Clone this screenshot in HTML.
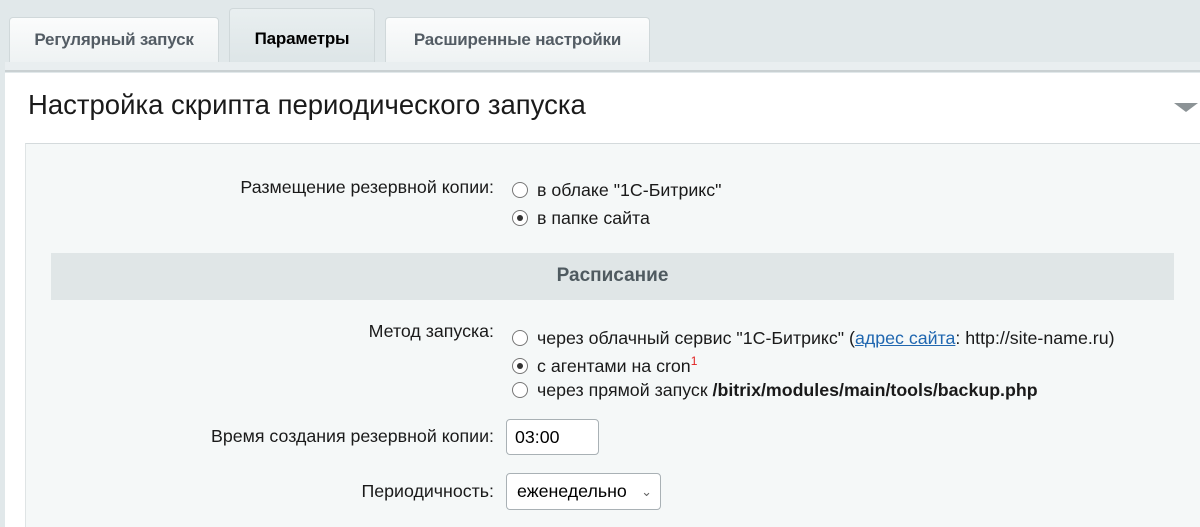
<!DOCTYPE html>
<html><head><meta charset="utf-8"><style>
*{margin:0;padding:0;box-sizing:border-box}
body{width:1200px;height:527px;overflow:hidden;background:#e1e8ea;font-family:"Liberation Sans",Arial,sans-serif;position:relative;color:#000}
.tab{position:absolute;top:17px;height:46px;background:linear-gradient(#fbfcfc,#eef2f3);border:1px solid #d0d8da;border-bottom:none;border-radius:4px 4px 0 0;font-size:17px;font-weight:bold;color:#535c64;text-align:center;line-height:44px;letter-spacing:-0.2px}
.tab.act{top:8px;height:55px;background:linear-gradient(#e9eff0,#dde5e7);color:#000;line-height:60px}
.bar{position:absolute;left:5px;right:0;top:62px;height:10px;background:#e9eef0;border-bottom:2px solid #c9d0d2}
.panel{position:absolute;left:5px;right:0;top:73px;bottom:0;background:#fff}
h1{position:absolute;left:28px;top:89px;font-size:27.5px;font-weight:normal;color:#1a1a1a}
.tri{position:absolute;right:2px;top:103px;width:0;height:0;border-left:12px solid transparent;border-right:12px solid transparent;border-top:9px solid #8c9396}
.content{position:absolute;left:25px;right:0;top:143px;bottom:0;background:#f5f8f8;border-top:1px solid #d4dadc;border-left:1px solid #dfe4e5}
.lbl{position:absolute;right:706px;font-size:17.8px;color:#1a1a1a;white-space:nowrap}
.opt{position:absolute;left:512px;font-size:17.8px;color:#1a1a1a;white-space:nowrap}
.r{display:inline-block;width:16px;height:16px;border:1px solid #777;border-radius:50%;background:#fff;vertical-align:-2px;margin-right:9px;position:relative}
.r.on::after{content:"";position:absolute;left:4px;top:4px;width:6px;height:6px;border-radius:50%;background:#333}
.sec{position:absolute;left:51px;width:1123px;top:253px;height:47px;background:#e0e6e7;font-size:19px;font-weight:bold;color:#4f5a60;text-align:center;line-height:46px}
a{color:#2067b0}
.inp{position:absolute;left:506px;width:93px;border:1px solid #a9b1b5;border-radius:4px;background:#fff;font-size:17.8px;padding-left:8px}
</style></head><body>
<div class="tab" style="left:9px;width:210px">Регулярный запуск</div>
<div class="tab act" style="left:229px;width:146px">Параметры</div>
<div class="tab" style="left:385px;width:265px">Расширенные настройки</div>
<div class="bar"></div>
<div class="panel"></div>
<h1>Настройка скрипта периодического запуска</h1>
<div class="tri"></div>
<div class="content"></div>
<div class="lbl" style="top:177px">Размещение резервной копии:</div>
<div class="opt" style="top:180px"><span class="r"></span>в облаке "1С-Битрикс"</div>
<div class="opt" style="top:208px"><span class="r on"></span>в папке сайта</div>
<div class="sec">Расписание</div>
<div class="lbl" style="top:321px">Метод запуска:</div>
<div class="opt" style="top:328px"><span class="r"></span>через облачный сервис "1С-Битрикс" (<a href="#">адрес сайта</a>: http://site-name.ru)</div>
<div class="opt" style="top:354px"><span class="r on"></span>с агентами на cron<sup style="color:#e02020;font-size:12px">1</sup></div>
<div class="opt" style="top:380px"><span class="r"></span>через прямой запуск <b>/bitrix/modules/main/tools/backup.php</b></div>
<div class="lbl" style="top:426px">Время создания резервной копии:</div>
<div class="inp" style="top:419px;height:36px;line-height:34px">03:00</div>
<div class="lbl" style="top:481px">Периодичность:</div>
<div class="inp" style="top:473px;height:37px;line-height:35px;width:155px;padding-left:10px">еженедельно<span style="position:absolute;right:8px;top:0;color:#666;font-size:13px">&#8964;</span></div>
</body></html>
